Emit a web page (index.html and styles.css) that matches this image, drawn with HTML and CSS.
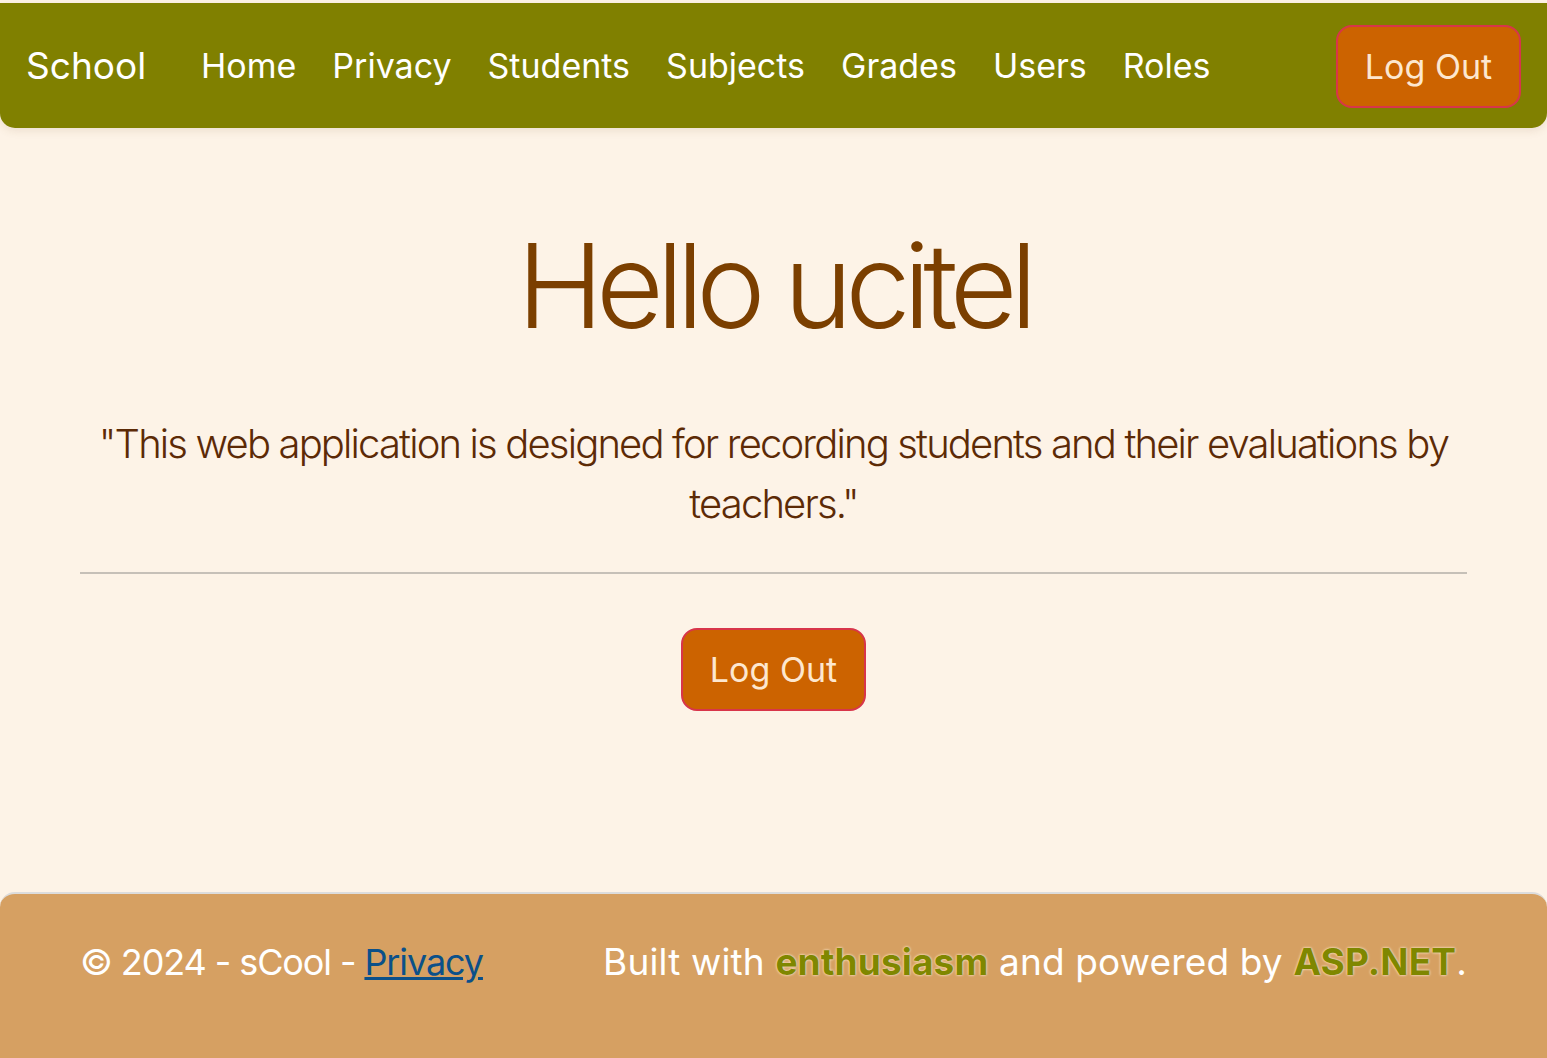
FILE: index.html
```html
<!DOCTYPE html>
<html lang="en">
<head>
<meta charset="utf-8">
<title>School</title>
<link rel="stylesheet" href="styles.css">
</head>
<body>
<div class="page">
  <header class="navbar">
    <a class="brand" href="#">School</a>
    <nav class="links">
      <a href="#">Home</a>
      <a href="#">Privacy</a>
      <a href="#">Students</a>
      <a href="#">Subjects</a>
      <a href="#">Grades</a>
      <a href="#">Users</a>
      <a href="#">Roles</a>
    </nav>
    <button class="btn">Log Out</button>
  </header>
  <main class="main">
    <h1 class="title">Hello ucitel</h1>
    <p class="lead">"This web application is designed for recording students and their evaluations by teachers."</p>
    <hr class="rule">
    <div class="actions"><button class="btn">Log Out</button></div>
  </main>
  <footer class="footer">
    <div class="footer-inner">
      <span class="copy">© 2024 - sCool - <a class="flink" href="#">Privacy</a></span>
      <span class="built">Built with <b class="hl">enthusiasm</b> and powered by <b class="hl">ASP.NET</b>.</span>
    </div>
  </footer>
</div>
</body>
</html>
```

FILE: styles.css
```css
* { box-sizing: border-box; }
html, body { margin: 0; padding: 0; }
body {
  background: #fdf3e7;
  font-family: Inter, "Noto Sans", sans-serif;
  height: 1058px;
  overflow: hidden;
}
.page {
  display: flex;
  flex-direction: column;
  height: 1058px;
  padding-top: 3px;
}
.navbar {
  display: flex;
  align-items: center;
  height: 125px;
  background: #808000;
  border-radius: 0 0 15px 15px;
  box-shadow: 0 3px 8px rgba(120, 90, 40, 0.12);
  padding: 0 26px 0 26px;
}
.brand {
  color: #fff;
  text-decoration: none;
  font-size: 37px;
  margin-right: 37px;
}
.links { display: flex; flex: 1; }
.links a {
  color: #fff;
  text-decoration: none;
  font-size: 34px;
  padding: 0 18px;
}
.btn {
  width: 185px;
  height: 83px;
  background: #cc6300;
  border: 2px solid #d8354a;
  border-radius: 16px;
  color: #fde7cf;
  font-family: Inter, "Noto Sans", sans-serif;
  font-size: 34px;
  padding: 0;
  margin-top: 2px;
}
.main {
  flex: 1;
  margin: 0 80px;
  text-align: center;
}
.title {
  font-size: 117px;
  font-weight: 300;
  color: #7b3f00;
  margin: 88px 0 0;
  line-height: 140px;
  letter-spacing: -7.4px;
}
.lead {
  font-size: 40px;
  font-weight: 300;
  color: #5c2a06;
  line-height: 60px;
  margin: 58px 0 0;
  letter-spacing: -1.85px;
}
.rule {
  border: 0;
  border-top: 2px solid #c6c0b8;
  margin: 38px 0 0;
}
.actions { margin-top: 54px; }
.actions .btn { margin-top: 0; }
.footer {
  height: 166px;
  background: #d6a062;
  border-top: 2px solid #dcdcdc;
  border-radius: 15px 15px 0 0;
  display: flex;
  align-items: center;
}
.footer-inner {
  width: 100%;
  margin: 0 80px;
  display: flex;
  justify-content: space-between;
  align-items: baseline;
  color: #fff;
  font-size: 37px;
  padding-bottom: 30px;
}
.copy { font-size: 36px; letter-spacing: -1.1px; }
.built { letter-spacing: 0.15px; }
.flink { color: #0b5089; text-decoration: underline; }
.hl {
  color: #7f8700;
  font-weight: 700;
  text-shadow: 0 0 3px #f7e0c0, 0 0 2px #f7e0c0;
}
```
